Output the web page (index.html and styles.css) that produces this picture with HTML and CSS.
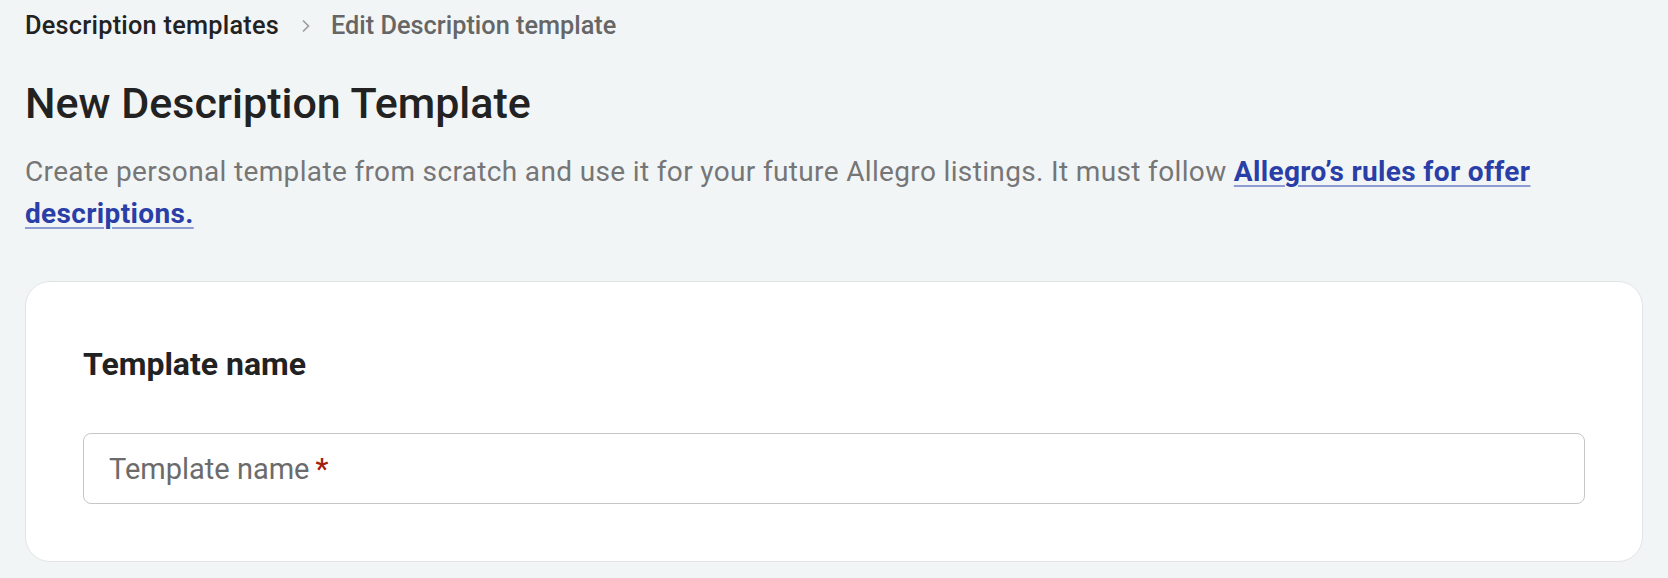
FILE: index.html
```html
<!DOCTYPE html>
<html lang="en">
<head>
<meta charset="utf-8">
<title>New Description Template</title>
<link rel="stylesheet" href="styles.css">
</head>
<body>
<div class="page">
  <nav class="breadcrumb">
    <a class="crumb" href="#">Description templates</a>
    <svg class="chev" width="10" height="14" viewBox="0 0 10 14" aria-hidden="true"><path d="M2 1.5 L7.5 7 L2 12.5" fill="none" stroke="#9a9a9a" stroke-width="1.6"/></svg>
    <span class="crumb-current">Edit Description template</span>
  </nav>
  <h1 class="title">New Description Template</h1>
  <p class="lead">Create personal template from scratch and use it for your future Allegro listings. It must follow <a class="link" href="#">Allegro’s rules for offer descriptions.</a></p>
  <section class="card">
    <h2 class="card-title">Template name</h2>
    <div class="field">
      <span class="placeholder">Template name</span><span class="req">*</span>
    </div>
  </section>
</div>
</body>
</html>
```

FILE: styles.css
```css
html, body {
  margin: 0;
  padding: 0;
  background: #f2f5f6;
  font-family: Roboto, "Liberation Sans", Arial, sans-serif;
  color: #222222;
}
.page {
  padding: 8px 25px 16px 25px;
  display: flex;
  flex-direction: column;
}
.breadcrumb {
  display: flex;
  align-items: center;
  font-size: 25.3px;
  line-height: 36px;
  height: 36px;
}
.crumb {
  color: #222222;
  font-weight: 500;
  letter-spacing: 0.25px;
  text-decoration: none;
}
.chev {
  margin: 0 20px 0 22px;
  display: block;
}
.crumb-current {
  color: #666666;
  font-weight: 500;
}
.title {
  margin: 33px 0 0 0;
  font-size: 43px;
  line-height: 52px;
  font-weight: 500;
  color: #222222;
}
.lead {
  margin: 22px 0 0 0;
  font-size: 28px;
  letter-spacing: 0.35px;
  line-height: 42px;
  color: #767676;
}
.link {
  color: #2a3ea8;
  font-weight: 700;
  text-decoration: underline;
  text-decoration-color: #8f9bd3;
  text-decoration-thickness: 2px;
  text-underline-offset: 4px;
}
.card {
  margin-top: 46px;
  background: #ffffff;
  border: 1px solid #e2e4e5;
  border-radius: 25px;
  padding: 64px 57px 57px 57px;
  display: flex;
  flex-direction: column;
}
.card-title {
  margin: 0;
  font-size: 32px;
  line-height: 36px;
  font-weight: 700;
  color: #222222;
}
.field {
  margin-top: 51px;
  height: 69px;
  border: 1px solid #c6c6c6;
  border-radius: 8px;
  padding: 0 25px;
  display: flex;
  align-items: center;
  font-size: 29px;
}
.placeholder {
  color: #6b6b6b;
}
.req {
  color: #a3200f;
  margin-left: 6px;
  font-weight: 500;
}
```
